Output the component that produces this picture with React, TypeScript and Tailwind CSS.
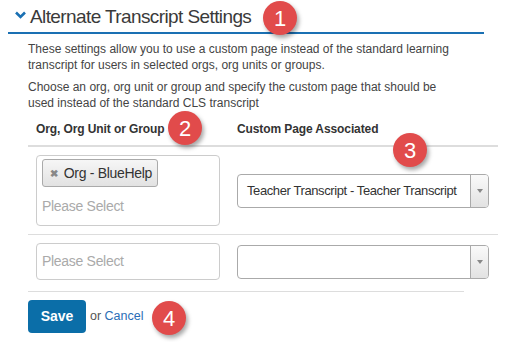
import React from "react"

function Badge({ n, className }: { n: number; className: string }) {
  return (
    <div
      className={`absolute flex h-[34px] w-[34px] items-center justify-center rounded-full bg-[#e14b4b] text-[22px] text-white shadow-[2px_3px_4px_rgba(0,0,0,0.35)] ${className}`}
    >
      {n}
    </div>
  )
}

function SelectBox({ value }: { value?: string }) {
  return (
    <div className="flex h-[34px] w-[252px] overflow-hidden rounded-[4px] border border-[#aaa] bg-white">
      <div className="flex flex-1 items-center whitespace-nowrap pl-[9px] text-[13px] tracking-[-0.4px] text-[#333]">
        {value}
      </div>
      <div className="flex w-[18px] items-center justify-center border-l border-[#aaa] bg-gradient-to-b from-[#fafafa] to-[#e2e2e2]">
        <span className="h-0 w-0 border-x-[3px] border-t-[4px] border-x-transparent border-t-[#888]" />
      </div>
    </div>
  )
}

export default function App() {
  return (
    <div className="relative h-[342px] w-[510px] bg-white font-['Liberation_Sans',Arial,sans-serif] text-[#444]">
      <div className="ml-[8px] flex h-[34px] w-[476px] items-center gap-[4px] border-b-2 border-[#1a70b3] pl-[7px]">
        <svg width="11" height="8" viewBox="0 0 11 8" className="mb-[2px]">
          <path d="M1 1.5 L5.5 6 L10 1.5" fill="none" stroke="#1a70b3" strokeWidth="2.6" />
        </svg>
        <span className="text-[19px] leading-none tracking-[-0.6px] text-[#3a3a3a]">Alternate Transcript Settings</span>
      </div>

      <div className="px-[28px] pt-[7px] text-[12px] leading-[16px]">
        <p className="w-[445px]">
          These settings allow you to use a custom page instead of the standard learning transcript for users in
          selected orgs, org units or groups.
        </p>
        <p className="mt-[6px] w-[420px]">
          Choose an org, org unit or group and specify the custom page that should be used instead of the standard
          CLS transcript
        </p>
      </div>

      <div className="ml-[28px] w-[470px]">
        <div className="flex h-[36px] items-center border-b-2 border-[#ddd] pt-[2px] text-[12px] font-bold tracking-[-0.1px] text-[#333]">
          <div className="w-[201px] pl-[8px]">Org, Org Unit or Group</div>
          <div className="pl-[8px]">Custom Page Associated</div>
        </div>

        <div className="flex h-[88px] items-center border-b border-[#ddd]">
          <div className="w-[201px] self-start pl-[8px] pt-[8px]">
            <div className="h-[71px] w-[184px] rounded-[4px] border border-[#ccc] px-[5px] pt-[3px]">
              <div className="flex h-[28px] w-[116px] items-center gap-[6px] whitespace-nowrap rounded-[3px] border border-[#aaa] bg-gradient-to-b from-[#f6f6f6] to-[#e2e2e2] pl-[7px] text-[14px] tracking-[-0.3px] text-[#333]">
                <span className="text-[10px] font-bold text-[#888]">✖</span>
                <span>Org - BlueHelp</span>
              </div>
              <div className="mt-[9px] text-[14px] tracking-[-0.3px] text-[#aaa]">Please Select</div>
            </div>
          </div>
          <div className="pl-[8px] pt-[1px]">
            <SelectBox value="Teacher Transcript - Teacher Transcript" />
          </div>
        </div>

        <div className="flex h-[56px] items-start">
          <div className="w-[201px] pl-[8px] pt-[8px]">
            <div className="flex h-[37px] w-[184px] items-center rounded-[4px] border border-[#ccc] pl-[5px] text-[14px] tracking-[-0.3px] text-[#aaa]">
              Please Select
            </div>
          </div>
          <div className="pl-[8px] pt-[10px]">
            <SelectBox />
          </div>
        </div>
        <div className="w-[436px] border-b border-[#ddd]" />

        <div className="mt-[8px] flex items-center gap-[4px]">
          <button className="h-[33px] w-[58px] rounded-[4px] bg-[#0b6ea8] text-[14px] font-bold text-white">Save</button>
          <span className="text-[12.5px] text-[#555]">
            or <span className="text-[#2a6eb6]">Cancel</span>
          </span>
        </div>
      </div>

      <Badge n={1} className="left-[263px] top-[1px]" />
      <Badge n={2} className="left-[168px] top-[111px]" />
      <Badge n={3} className="left-[393px] top-[133px]" />
      <Badge n={4} className="left-[152px] top-[301px]" />
    </div>
  )
}
